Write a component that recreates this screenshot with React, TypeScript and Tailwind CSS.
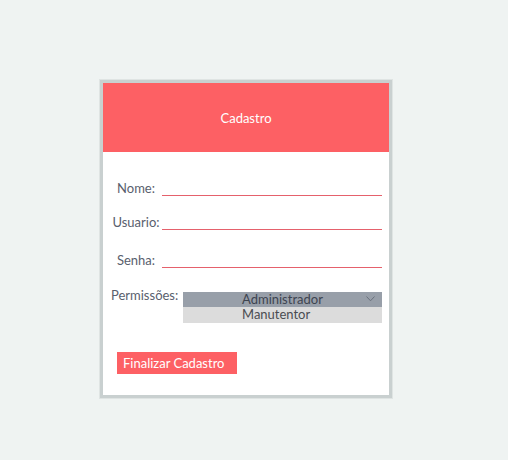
export default function App() {
  const font = "font-['Lato',sans-serif]";
  return (
    <div className={`min-h-[460px] w-full bg-[#eff3f2] pt-[80px] pl-[100px] ${font}`}>
      <div className="w-[292px] h-[318px] border-[3px] border-[#c9d0d0] bg-white shadow-[0_0_0_1px_#dfe4e3] flex flex-col">
        <div className="h-[69px] bg-[#fd6064] flex items-center justify-center text-white text-[13px] leading-[16px]">
          Cadastro
        </div>
        <div className="flex flex-col text-[13px] leading-[16px] text-[#59606d]">
          <div className="flex items-end mt-[28px] pl-[7px]">
            <div className="w-[52px] text-center">Nome:</div>
            <div className="w-[220px] h-[16px] flex flex-col justify-end">
              <div className="h-px bg-[#e5616c]" />
            </div>
          </div>
          <div className="flex items-end mt-[18px] pl-[7px]">
            <div className="w-[52px] text-center whitespace-nowrap">Usuario:</div>
            <div className="w-[220px] h-[16px] flex flex-col justify-end">
              <div className="h-px bg-[#e5616c]" />
            </div>
          </div>
          <div className="flex items-end mt-[22px] pl-[7px]">
            <div className="w-[52px] text-center">Senha:</div>
            <div className="w-[220px] h-[16px] flex flex-col justify-end">
              <div className="h-px bg-[#e5616c]" />
            </div>
          </div>
          <div className="flex items-start mt-[19px] pl-[7px]">
            <div className="w-[73px] pl-[1px]">Permissões:</div>
            <div className="w-[199px] mt-[5px] flex flex-col">
              <div className="relative h-[15px] bg-[#989fa9] text-[#3e4450] leading-[15px] pl-[59px]">
                Administrador
                <svg className="absolute right-[7px] top-[4px]" width="9" height="6" viewBox="0 0 9 6" fill="none">
                  <path d="M0.5 0.5 L4.5 4.8 L8.5 0.5" stroke="#6a717d" strokeWidth="1" />
                </svg>
              </div>
              <div className="h-[16px] bg-[#dcdcdc] text-[#4a4d52] leading-[15px] pl-[59px]">
                Manutentor
              </div>
            </div>
          </div>
          <div className="mt-[29px] pl-[14px]">
            <div className="inline-flex items-center h-[22px] w-[120px] pl-[6px] bg-[#fd6064] text-white text-[13px] leading-[16px] whitespace-nowrap">
              Finalizar Cadastro
            </div>
          </div>
        </div>
      </div>
    </div>
  );
}
